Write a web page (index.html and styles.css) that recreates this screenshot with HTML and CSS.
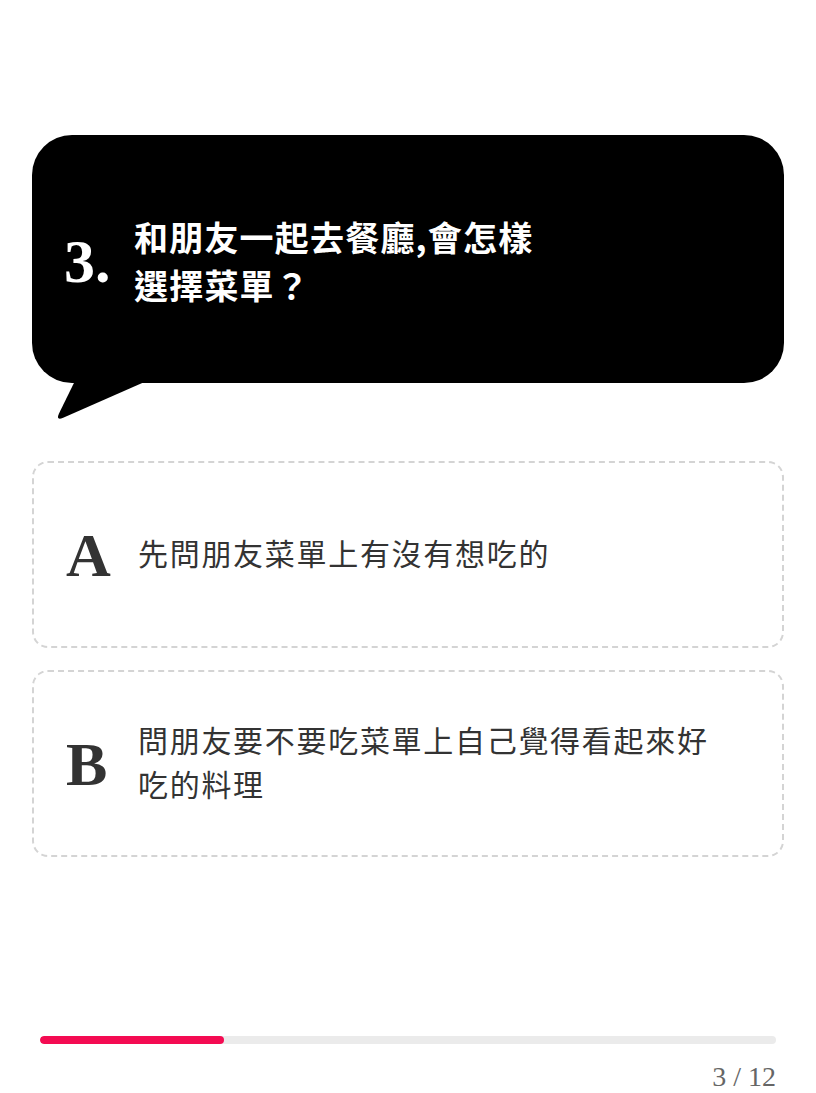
FILE: index.html
```
<!DOCTYPE html>
<html lang="zh-Hant">
<head>
<meta charset="utf-8">
<title>Quiz 3 / 12</title>
<link rel="stylesheet" href="styles.css">
</head>
<body>
<main class="page">
  <section class="bubble">
    <div class="q-num">3.</div>
    <h1 class="q-text">和朋友一起去餐廳,會怎樣選擇菜單？</h1>
    <svg class="bubble-tail" width="110" height="42" viewBox="0 0 110 42" aria-hidden="true">
      <path d="M23.4 0 L7 33.6 Q3.6 41 11.2 37.8 L97 0 Z" fill="#000"/>
    </svg>
  </section>

  <section class="options">
    <div class="option">
      <span class="opt-letter">A</span>
      <span class="opt-text">先問朋友菜單上有沒有想吃的</span>
    </div>
    <div class="option">
      <span class="opt-letter">B</span>
      <span class="opt-text">問朋友要不要吃菜單上自己覺得看起來好吃的料理</span>
    </div>
  </section>

  <section class="progress">
    <div class="track"><div class="fill" style="width:25%"></div></div>
    <div class="counter">3 / 12</div>
  </section>
</main>
</body>
</html>
```
FILE: styles.css
```
* { box-sizing: border-box; }

html, body {
  margin: 0;
  padding: 0;
  background: #fff;
}

body {
  font-family: "Noto Sans CJK TC", "Noto Sans", sans-serif;
  color: #333;
}

.page {
  width: 816px;
  padding: 135px 32px 0;
}

.bubble {
  position: relative;
  height: 248px;
  background: #000;
  border-radius: 40px;
  display: flex;
  align-items: center;
  padding: 4px 0 0 32px;
}

.q-num {
  width: 70px;
  flex: none;
  font-family: "Liberation Serif", "Times New Roman", serif;
  font-weight: 700;
  font-size: 62px;
  line-height: 1;
  color: #fff;
}

.q-text {
  margin: 0;
  width: 415px;
  font-family: "Noto Sans CJK TC", sans-serif;
  font-weight: 700;
  font-size: 34px;
  letter-spacing: 1.2px;
  line-height: 48px;
  color: #fff;
}

.bubble-tail {
  position: absolute;
  left: 20px;
  top: 245px;
  display: block;
}

.options {
  margin-top: 78px;
  display: flex;
  flex-direction: column;
  gap: 22px;
}

.option {
  height: 187px;
  border: 2px dashed #d4d4d4;
  border-radius: 16px;
  display: flex;
  align-items: center;
  padding-left: 32px;
}

.opt-letter {
  width: 72px;
  flex: none;
  font-family: "Liberation Serif", "Times New Roman", serif;
  font-weight: 700;
  font-size: 62px;
  line-height: 1;
  color: #333;
}

.opt-text {
  max-width: 590px;
  margin-bottom: 6px;
  font-family: "Noto Sans CJK TC", sans-serif;
  font-weight: 400;
  font-size: 30px;
  letter-spacing: 1.7px;
  line-height: 44px;
  color: #333;
}

.progress {
  margin-top: 179px;
  padding: 0 8px;
}

.track {
  height: 8px;
  border-radius: 4px;
  background: #ebebeb;
  overflow: hidden;
}

.fill {
  height: 100%;
  border-radius: 4px;
  background: #f40b52;
}

.counter {
  margin-top: 17px;
  text-align: right;
  font-family: "Liberation Serif", "Times New Roman", serif;
  font-size: 28px;
  line-height: 32px;
  color: #666;
}
```
